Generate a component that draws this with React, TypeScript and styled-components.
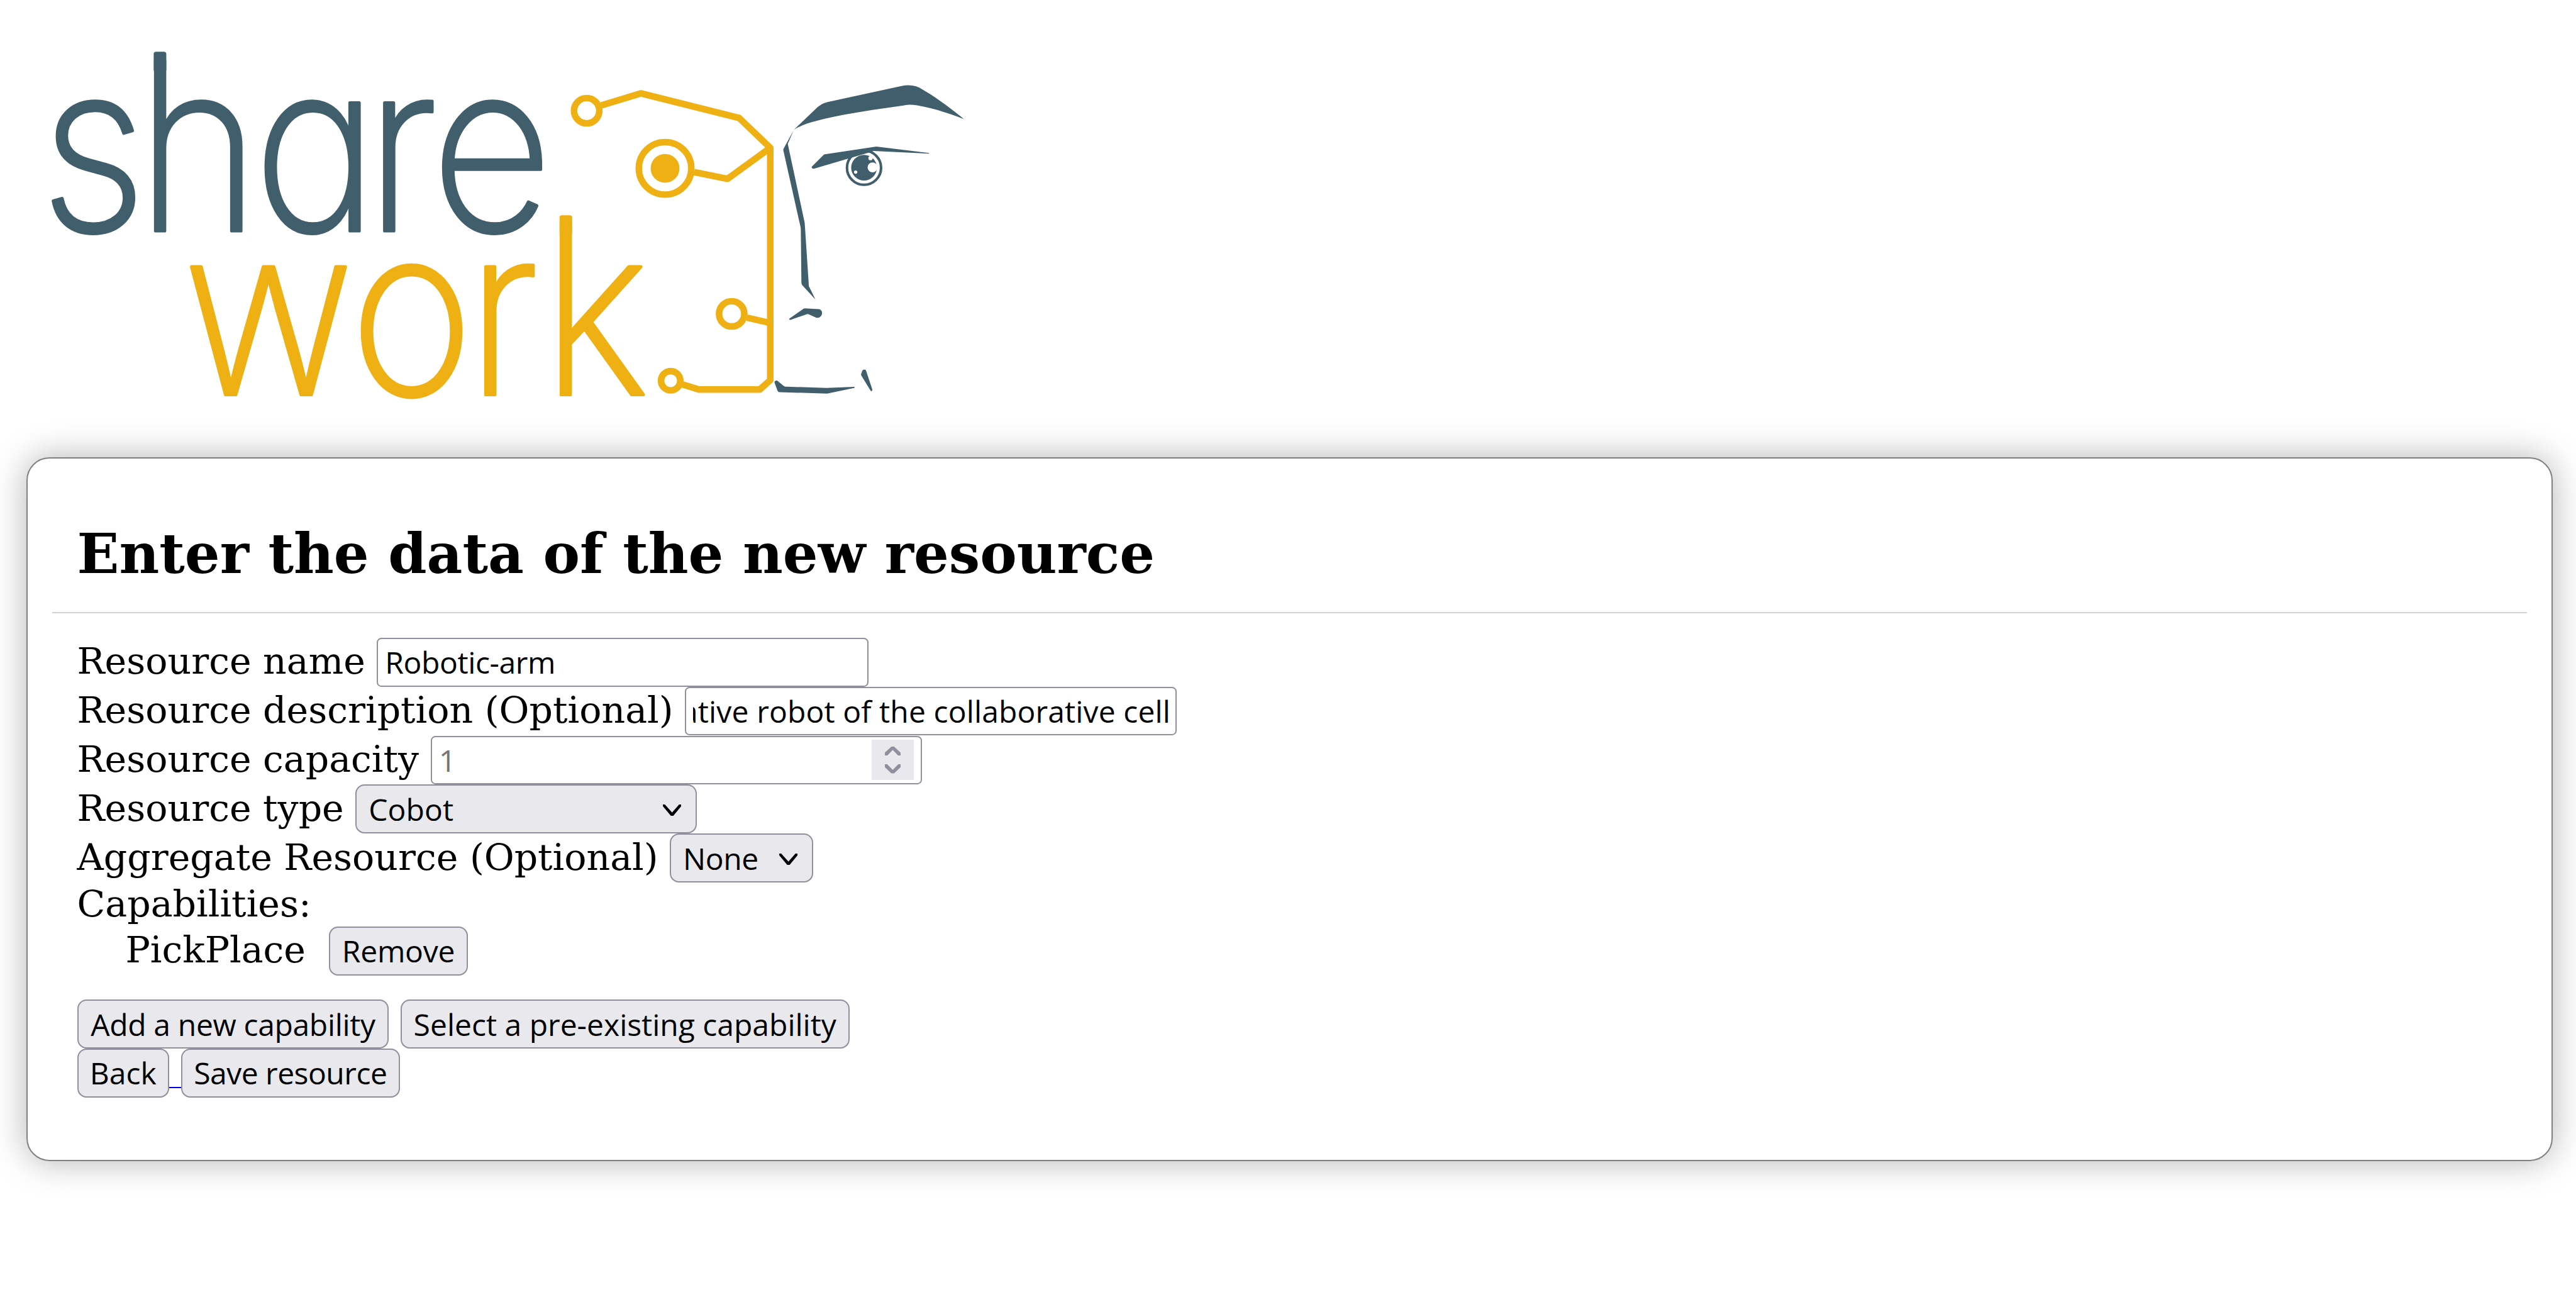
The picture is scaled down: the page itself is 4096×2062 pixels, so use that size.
import React, { useLayoutEffect, useRef } from "react";
import styled, { createGlobalStyle } from "styled-components";

const SLATE = "#405e6b";
const AMBER = "#eeb012";

const GlobalStyle = createGlobalStyle`
  html, body {
    margin: 0;
    padding: 0;
    background: #ffffff;
  }
  body {
    color: #000000;
    font-family: "DejaVu Serif", serif;
    font-size: 58.51px;
  }
  *, *::before, *::after {
    box-sizing: border-box;
  }
`;

const Page = styled.div`
  display: flex;
  flex-direction: column;
  width: 4096px;
  height: 2062px;
  overflow: hidden;
`;

const Header = styled.header`
  display: flex;
  height: 727.2px;
`;

const LogoSvg = styled.svg`
  display: block;
  width: 1600px;
  height: 693.33px;
`;

const Wordmark = styled.text<{ $color: string }>`
  font-family: Inter, sans-serif;
  font-weight: 200;
  font-size: 698px;
  font-feature-settings: "cv11" 1;
  fill: ${(p) => p.$color};
  stroke: ${(p) => p.$color};
  stroke-width: 10px;
  stroke-linejoin: round;
`;

const Card = styled.main`
  display: flex;
  flex-direction: column;
  height: 1119px;
  margin: 0 37px 0 41.6px;
  padding: 0 39.4px;
  background: #ffffff;
  border: 2px solid #808080;
  border-radius: 36.6px;
  box-shadow: 0 0 55px rgba(0, 0, 0, 0.3);
`;

const CardHead = styled.div`
  padding: 102.3px 39.6px 41.4px;
  border-bottom: 2px solid #d3d3d3;
`;

const Title = styled.h2`
  margin: 0;
  font-size: 87.77px;
  line-height: 100px;
  font-weight: bold;
  white-space: nowrap;
`;

const Form = styled.form`
  display: flex;
  flex-direction: column;
  padding: 39.2px 39.6px 0;
`;

const Row = styled.div<{ $indent?: number; $gap?: number; $top?: number }>`
  display: flex;
  align-items: baseline;
  height: 77.8px;
  margin-top: ${(p) => p.$top ?? 0}px;
  padding-left: ${(p) => p.$indent ?? 0}px;
  gap: ${(p) => p.$gap ?? 18.6}px;
`;

const Label = styled.label`
  line-height: 60px;
  white-space: nowrap;
`;

const SectionLabel = styled.div`
  height: 70px;
  line-height: 68px;
  white-space: nowrap;
`;

const controlText = `
  font-family: "Open Sans", "Noto Sans", sans-serif;
  font-size: 48px;
  font-weight: 400;
  color: #000000;
`;

const TextInput = styled.input<{ $tracking?: number }>`
  ${controlText}
  appearance: none;
  width: 781.5px;
  height: 77.6px;
  margin: 0;
  padding: 0 8px 0 11px;
  background: #ffffff;
  border: 2px solid #8f8f9d;
  border-radius: 7.3px;
  outline: none;
  letter-spacing: ${(p) => p.$tracking ?? 0}px;
`;

const NumberField = styled.div`
  display: flex;
  align-items: baseline;
  width: 781.5px;
  height: 77.6px;
  padding: 0 11.6px 0 11px;
  background: #ffffff;
  border: 2px solid #8f8f9d;
  border-radius: 7.3px;
`;

const NumberInput = styled.input`
  ${controlText}
  appearance: textfield;
  flex: 1;
  min-width: 0;
  height: 73.6px;
  margin: 0;
  padding: 0;
  border: 0;
  outline: none;
  background: transparent;
  &::placeholder {
    color: #757575;
    opacity: 1;
  }
  &::-webkit-inner-spin-button {
    appearance: none;
  }
`;

const Spinner = styled.div`
  display: flex;
  flex-direction: column;
  align-items: center;
  align-self: center;
  justify-content: space-between;
  width: 66.4px;
  height: 64px;
  padding: 10.6px 0;
  background: #e9e9ed;
`;

const SpinnerArrow = styled.svg`
  display: block;
  width: 25px;
  height: 14.4px;
  fill: #8f8f9d;
`;

const SelectBox = styled.div<{ $width: number }>`
  display: flex;
  position: relative;
  width: ${(p) => p.$width}px;
  height: 77.6px;
`;

const Select = styled.select<{ $tracking?: number }>`
  ${controlText}
  appearance: none;
  width: 100%;
  height: 100%;
  margin: 0;
  padding: 0 0 0 18.8px;
  background: #e9e9ed;
  border: 2px solid #8f8f9d;
  border-radius: 14.6px;
  letter-spacing: ${(p) => p.$tracking ?? 0}px;
`;

const Chevron = styled.svg`
  position: absolute;
  right: 24.8px;
  top: 31.4px;
  width: 29.3px;
  height: 18.1px;
  fill: #000000;
  pointer-events: none;
`;

const Button = styled.button<{ $width: number; $tracking?: number }>`
  ${controlText}
  appearance: none;
  width: ${(p) => p.$width}px;
  height: 77.6px;
  margin: 0;
  padding: 0;
  background: #e9e9ed;
  border: 2px solid #8f8f9d;
  border-radius: 14.6px;
  letter-spacing: ${(p) => p.$tracking ?? 0}px;
  white-space: nowrap;
`;

const BackLink = styled.a`
  display: flex;
  align-items: baseline;
  text-decoration: none;
`;

const LinkGap = styled.span`
  align-self: flex-start;
  width: 18.8px;
  height: 62.6px;
  border-bottom: 2px solid #0000ee;
`;

function Logo() {
  return (
    <LogoSvg viewBox="0 0 3000 1300" role="img" aria-label="sharework">
      <Wordmark $color={SLATE} transform="scale(.9 1)" x="133 452 840 1211 1428" y="688">
        share
      </Wordmark>
      <Wordmark $color={AMBER} transform="scale(.9 1)" x="606 1159 1546 1796" y="1176.5">
        work
      </Wordmark>
      {/* taller ascender stems */}
      <rect x="458.2" y="154" width="37.6" height="60" rx="7" fill={SLATE} />
      <rect x="1668.2" y="641.7" width="37.6" height="60" rx="7" fill={AMBER} />

      {/* circuit half of the head */}
      <g fill="none" stroke={AMBER} strokeWidth="19.6" strokeLinejoin="round">
        <circle cx="1749.1" cy="330" r="37.7" />
        <path d="M1792.9 314.1 1910.3 278.3 2204 351.9 2296.4 440.8V1133.3L2265.2 1161.1H2083.9L2034.8 1145.9" />
        <circle cx="1982.8" cy="501.8" r="78.3" />
        <circle cx="1982.8" cy="501.8" r="43" fill={AMBER} stroke="none" />
        <path d="M2069.6 513.1 2169.2 533 2296.4 440.8" />
        <circle cx="2181.4" cy="935.6" r="37.7" />
        <path d="M2226.8 946.9 2296.4 962.8" />
        <circle cx="1999.5" cy="1134.9" r="28.8" />
      </g>

      {/* human half of the head */}
      <g fill={SLATE} transform="translate(2250 200) scale(.4464 .6633)">
        <path d="M258 284 395 196C425 175 450 163 487 157L980 85C1030 77 1080 82 1117 99C1210 135 1300 180 1398 234C1290 205 1180 183 1085 172C1050 168 1020 169 1000 172C700 200 350 235 258 284Z" />
        <path d="M260 284 195 364Q190 369 192 376L305 715Q308 722 308 730L312 968Q312 976 319 981L406 1045 362 985 334 700 221 345 260 284Z" />
        <path d="M232 1130 322 1088Q328 1084 336 1084L430 1088C444 1090 451 1098 450 1107C448 1120 430 1131 408 1125L357 1110Q352 1109 346 1111L240 1136Q228 1137 232 1130Z" />
        <path d="M132 1417Q134 1408 150 1409L192 1432Q200 1437 208 1436L480 1442 665 1437Q670 1440 665 1442L484 1467 165 1461Q158 1460 153 1455Z" />
        <path d="M712 1377 718 1366C724 1357 741 1357 745 1366L786 1450Q784 1458 776 1456L712 1386Q709 1382 712 1377Z" />
      </g>
      <g fill={SLATE} transform="translate(2300 400) scale(.33333)">
        <circle cx="828" cy="300" r="152.5" fill="none" stroke={SLATE} strokeWidth="23" />
        <circle cx="828" cy="300" r="115" />
        <circle cx="904" cy="297" r="44" fill="#ffffff" />
        <circle cx="886" cy="214" r="19" fill="#ffffff" />
        <circle cx="753" cy="339" r="15" fill="#ffffff" />
        <path d="M362 289 468 184Q472 180 480 180L938 111 1409 168V174L915 150 905 153 868 165 724 207 684 219 384 308Q368 312 361 300 358 294 362 289Z" />
      </g>
    </LogoSvg>
  );
}

function SelectField(props: { value: string; width: number; tracking?: number }) {
  return (
    <SelectBox $width={props.width}>
      <Select $tracking={props.tracking} defaultValue={props.value}>
        <option>{props.value}</option>
      </Select>
      <Chevron viewBox="0 0 55 34">
        <path d="M0 0H6L27.5 24 48.5 0H55V5L31 34H24L0 5Z" />
      </Chevron>
    </SelectBox>
  );
}

function DescriptionInput() {
  const ref = useRef<HTMLInputElement>(null);
  useLayoutEffect(() => {
    const showEnd = () => {
      if (ref.current) ref.current.scrollLeft = ref.current.scrollWidth;
    };
    showEnd();
    document.fonts?.ready.then(showEnd);
  }, []);
  return (
    <TextInput ref={ref} $tracking={0.13} defaultValue="Collaborative robot of the collaborative cell" />
  );
}

export default function App() {
  return (
    <Page>
      <GlobalStyle />
      <Header>
        <Logo />
      </Header>
      <Card>
        <CardHead>
          <Title>Enter the data of the new resource</Title>
        </CardHead>
        <Form>
          <Row>
            <Label>Resource name</Label>
            <TextInput $tracking={-0.4} defaultValue="Robotic-arm" />
          </Row>
          <Row>
            <Label>Resource description (Optional)</Label>
            <DescriptionInput />
          </Row>
          <Row>
            <Label>Resource capacity</Label>
            <NumberField>
              <NumberInput type="number" placeholder="1" />
              <Spinner>
                <SpinnerArrow viewBox="0 0 47 27">
                  <path d="M0 27V18L19.5 0H27.5L47 18V27H40L23.5 10 7 27Z" />
                </SpinnerArrow>
                <SpinnerArrow viewBox="0 0 47 27">
                  <path d="M0 0V9L19.5 27H27.5L47 9V0H40L23.5 17 7 0Z" />
                </SpinnerArrow>
              </Spinner>
            </NumberField>
          </Row>
          <Row>
            <Label>Resource type</Label>
            <SelectField value="Cobot" width={542.8} tracking={0.13} />
          </Row>
          <Row>
            <Label>Aggregate Resource (Optional)</Label>
            <SelectField value="None" width={227.4} tracking={-0.4} />
          </Row>
          <SectionLabel>Capabilities:</SectionLabel>
          <Row $indent={76.8} $gap={37.2}>
            <Label as="span">PickPlace</Label>
            <Button type="button" $width={220.6} $tracking={-0.25}>Remove</Button>
          </Row>
          <Row $top={38.4}>
            <Button type="button" $width={495.7} $tracking={-0.34}>Add a new capability</Button>
            <Button type="button" $width={713.8}>Select a pre-existing capability</Button>
          </Row>
          <Row $gap={0}>
            <BackLink href="#">
              <Button type="button" $width={146.4}>Back</Button>
              <LinkGap />
            </BackLink>
            <Button type="button" $width={348} $tracking={-0.5}>Save resource</Button>
          </Row>
        </Form>
      </Card>
    </Page>
  );
}
